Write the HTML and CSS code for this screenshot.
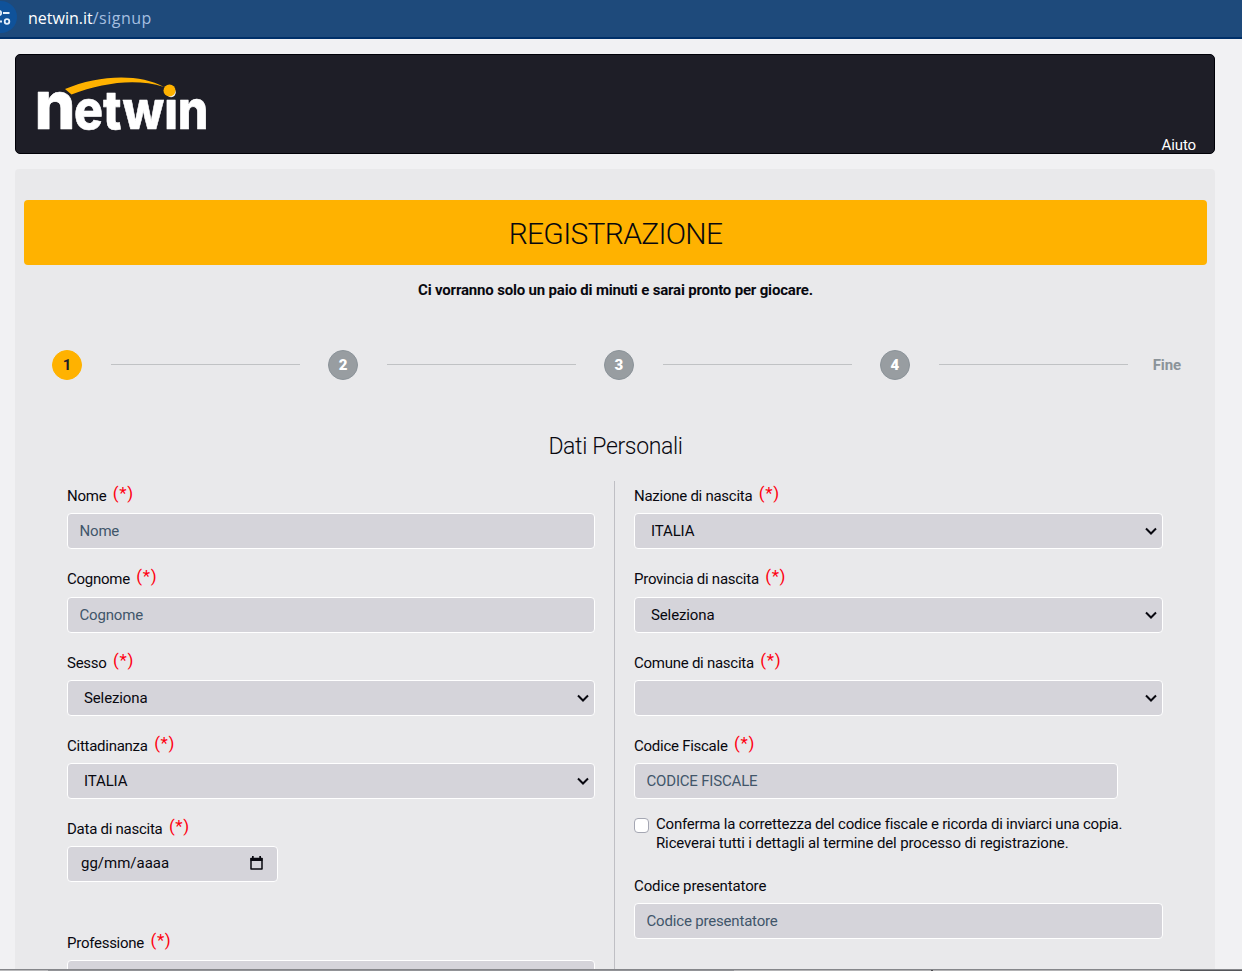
FILE: index.html
```html
<!DOCTYPE html>
<html lang="it">
<head>
    <meta charset="UTF-8">
    <meta name="viewport" content="width=device-width, initial-scale=1.0">
    <title>Netwin - Registrazione</title>
    <link rel="stylesheet" href="styles.css">
</head>
<body>
    <div class="address-bar">
        <svg class="site-info" width="17" height="34" viewBox="0 0 17 34">
            <circle cx="1" cy="17" r="16" fill="#0f529a"/>
            <g fill="none" stroke="#e6f0fb" stroke-width="1.8">
                <path d="M3 13H9.5M0 21.500H2"/>
                <circle cx="-1" cy="13" r="2.2"/>
                <circle cx="7" cy="21.500" r="2.3"/>
            </g>
        </svg>
        <span class="url">netwin.it<span class="path">/signup</span></span>
    </div>

    <div class="page">
        <header class="header">
            <svg class="logo" width="190" height="96" viewBox="-4 -18 190 96" role="img" aria-label="netwin">
                <g class="logo-text">
                    <text x="-2.500" y="54.500" font-size="67" textLength="41" lengthAdjust="spacingAndGlyphs">n</text>
                    <text x="37" y="54.500" font-size="54" textLength="134.500" lengthAdjust="spacingAndGlyphs">etwin</text>
                </g>
                <path d="M28 15C61 1 102-1 127 13C98 4 66 9 34.500 20.500Z" fill="#ffb200"/>
                <circle cx="132.500" cy="16.500" r="6" fill="#ffb200"/>
            </svg>
            <a class="help">Aiuto</a>
        </header>

        <main class="content">
            <h1>REGISTRAZIONE</h1>
            <p class="intro">Ci vorranno solo un paio di minuti e sarai pronto per giocare.</p>

            <div class="steps">
                <span class="step active">1</span>
                <span class="line"></span>
                <span class="step">2</span>
                <span class="line"></span>
                <span class="step">3</span>
                <span class="line"></span>
                <span class="step">4</span>
                <span class="line"></span>
                <span class="end">Fine</span>
            </div>

            <h2>Dati Personali</h2>

            <form class="form">
                <div class="column left">
                    <div class="field">
                        <label>Nome <span class="req">(*)</span></label>
                        <input type="text" placeholder="Nome">
                    </div>
                    <div class="field">
                        <label>Cognome <span class="req">(*)</span></label>
                        <input type="text" placeholder="Cognome">
                    </div>
                    <div class="field">
                        <label>Sesso <span class="req">(*)</span></label>
                        <select><option>Seleziona</option></select>
                    </div>
                    <div class="field">
                        <label>Cittadinanza <span class="req">(*)</span></label>
                        <select><option>ITALIA</option></select>
                    </div>
                    <div class="field birth">
                        <label>Data di nascita <span class="req">(*)</span></label>
                        <div class="date">
                            <span>gg/mm/aaaa</span>
                            <svg width="13" height="14" viewBox="0 0 13 14">
                                <path d="M1 2.500H12V13H1Z" fill="none" stroke="#08080f" stroke-width="1.500" stroke-linejoin="round"/>
                                <path d="M0.500 2H12.500V5H0.500ZM2 0H3.700V2H2ZM9.300 0H11V2H9.300Z" fill="#08080f"/>
                            </svg>
                        </div>
                    </div>
                    <div class="field">
                        <label>Professione <span class="req">(*)</span></label>
                        <select><option></option></select>
                    </div>
                </div>

                <div class="column right">
                    <div class="field">
                        <label>Nazione di nascita <span class="req">(*)</span></label>
                        <select><option>ITALIA</option></select>
                    </div>
                    <div class="field">
                        <label>Provincia di nascita <span class="req">(*)</span></label>
                        <select><option>Seleziona</option></select>
                    </div>
                    <div class="field">
                        <label>Comune di nascita <span class="req">(*)</span></label>
                        <select><option></option></select>
                    </div>
                    <div class="field fiscal">
                        <label>Codice Fiscale <span class="req">(*)</span></label>
                        <input type="text" placeholder="CODICE FISCALE">
                    </div>
                    <div class="confirm">
                        <input type="checkbox" class="check">
                        <p>Conferma la correttezza del codice fiscale e ricorda di inviarci una copia.<br><span class="second">Riceverai tutti i dettagli al termine del processo di registrazione.</span></p>
                    </div>
                    <div class="field">
                        <label class="plain">Codice presentatore</label>
                        <input type="text" placeholder="Codice presentatore">
                    </div>
                </div>
            </form>
        </main>
    </div>
    <div class="bottom-edge"></div>
</body>
</html>
```
FILE: styles.css
```css
* {
    box-sizing: border-box;
}

body {
    margin: 0;
    height: 971px;
    overflow: hidden;
    display: flex;
    flex-direction: column;
    background: #f1f1f3;
    color: #08080f;
    font-family: Roboto, sans-serif;
    font-size: 15px;
    letter-spacing: -0.12px;
}

.address-bar {
    flex: none;
    display: flex;
    align-items: flex-start;
    height: 39px;
    background: #1e4a7b;
    border-bottom: 2px solid #003069;
}

.url {
    margin-left: 11px;
    color: #fff;
    font-family: "Open Sans", sans-serif;
    font-size: 16px;
    line-height: 36px;
    letter-spacing: 0;
}

.path {
    color: #a5bfe0;
    letter-spacing: 0.5px;
}

.page {
    flex: 1;
    min-height: 0;
    width: 1200px;
    margin-left: 15px;
    padding-top: 15px;
    overflow: hidden;
}

.header {
    display: flex;
    justify-content: space-between;
    align-items: flex-end;
    height: 100px;
    padding: 0 18px 0 17px;
    background: #1e1e27;
    border: 1px solid #000007;
    border-radius: 5px;
}

.logo {
    align-self: flex-start;
    margin-top: 1px;
}

.logo-text {
    fill: #fff;
    stroke: #fff;
    stroke-width: 0.6;
    stroke-linejoin: round;
    font-family: Inter, sans-serif;
    font-weight: 800;
    letter-spacing: 0;
}

.help {
    color: #fff;
    line-height: 16px;
}

.content {
    height: 830px;
    margin-top: 15px;
    padding: 31px 8px 0 9px;
    background: #e9e9eb;
    border-radius: 4px;
}

h1 {
    height: 65px;
    margin: 0;
    background: #ffb200;
    border-radius: 4px;
    font-size: 30px;
    font-weight: 300;
    line-height: 67px;
    letter-spacing: -0.7px;
    text-align: center;
}

.intro {
    margin: 15px 0 0;
    font-weight: 700;
    line-height: 20px;
    letter-spacing: -0.18px;
    text-align: center;
}

.steps {
    display: flex;
    align-items: center;
    margin-top: 50px;
    padding: 0 26px 0 28px;
    height: 30px;
}

.step {
    width: 30px;
    height: 30px;
    border-radius: 50%;
    background: #989da1;
    border: 1px solid #8b9399;
    color: #fff;
    font-weight: 900;
    line-height: 28px;
    text-align: center;
}

.step.active {
    background: #ffb200;
    border-color: #ffb200;
    color: #1e1e27;
    font-weight: 700;
}

.line {
    flex: 1;
    height: 1px;
    margin: 0 28px 1px 29px;
    background: #c0c2c4;
}

.line:nth-last-child(2) {
    margin-right: 25px;
}

.end {
    color: #8b9399;
    font-weight: 700;
}

h2 {
    margin: 52px 0 0;
    font-size: 23px;
    font-weight: 300;
    line-height: 30px;
    letter-spacing: -0.35px;
    text-align: center;
}

.form {
    display: flex;
    height: 500px;
    margin: 19px 36px 0 43px;
}

.column {
    flex: none;
}

.left {
    width: 548px;
    padding-right: 19px;
    border-right: 1px solid #bfbfc4;
}

.right {
    width: 548px;
    padding-left: 19px;
}

.field {
    height: 83.25px;
}

label {
    display: block;
    height: 32.3px;
    line-height: 31px;
    letter-spacing: -0.26px;
    white-space: nowrap;
}

label.plain {
    letter-spacing: -0.12px;
}

.req {
    margin-left: 3px;
    color: #ff0010;
    font-size: 17px;
    line-height: 20px;
    letter-spacing: 0.6px;
    position: relative;
    top: -2px;
}

.field input,
select,
.date {
    display: block;
    width: 100%;
    height: 36.2px;
    padding: 0 12px 0 11.5px;
    background: #d5d4da;
    border: 1px solid #fff;
    border-radius: 4px;
    color: #08080f;
    font: inherit;
    letter-spacing: inherit;
}

select {
    appearance: none;
    padding-left: 16px;
    background-image: url("data:image/svg+xml,%3Csvg xmlns='http://www.w3.org/2000/svg' width='12' height='8'%3E%3Cpath d='M1 1.500L6 6.500L11 1.500' fill='none' stroke='%2308080f' stroke-width='2'/%3E%3C/svg%3E");
    background-repeat: no-repeat;
    background-position: right 5px center;
}

.field input::placeholder {
    color: #41566a;
    opacity: 1;
    letter-spacing: -0.18px;
}

.birth {
    height: 114px;
}

.date {
    display: flex;
    justify-content: space-between;
    align-items: center;
    width: 211px;
    padding: 0 14px 2px 13px;
    letter-spacing: 0;
}

.fiscal input {
    width: 484px;
}

.confirm {
    display: flex;
    gap: 7px;
    height: 57px;
}

.check {
    appearance: none;
    flex: none;
    width: 15px;
    height: 15px;
    margin: 4px 0 0;
    background: #fff;
    border: 1px solid #a5a7b3;
    border-radius: 4px;
}

.confirm p {
    margin: 1px 0 0;
    line-height: 19px;
    letter-spacing: -0.21px;
    white-space: nowrap;
}

.confirm .second {
    letter-spacing: -0.13px;
}

.bottom-edge {
    flex: none;
    height: 2px;
    background: linear-gradient(90deg, #b9b9bb 48px, #929397 48px 734px, #b3b3b5 734px 931px, #4c4c50 931px 933px, #b3b3b5 933px 1180px, #55565a 1180px);
    border-top: 1px solid #85868a;
}
```
